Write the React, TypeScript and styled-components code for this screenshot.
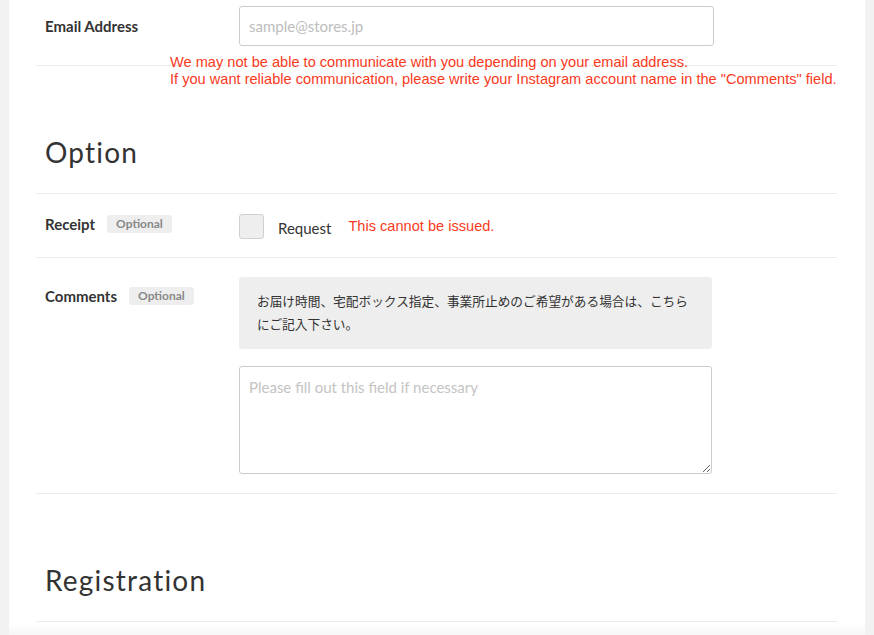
import React from 'react';
import styled, { createGlobalStyle } from 'styled-components';

const GlobalStyle = createGlobalStyle`
  html, body {
    margin: 0;
    padding: 0;
    background: #f2f2f2;
  }
  body {
    font-family: Lato, "Noto Sans CJK JP", sans-serif;
    color: #333;
  }
`;

const Panel = styled.div`
  margin: 0 9px;
  background: #fff;
  padding: 0 28px 0 27px;
`;

const Row = styled.div<{ $top: number; $bottom: number; $align?: string }>`
  position: relative;
  display: flex;
  align-items: ${(p) => p.$align || 'center'};
  padding: ${(p) => `${p.$top}px 0 ${p.$bottom}px 9px`};
  border-bottom: 1px solid #ececec;
`;

const LabelCol = styled.div<{ $height?: number }>`
  width: 194px;
  flex-shrink: 0;
  align-self: ${(p) => (p.$height ? 'flex-start' : 'auto')};
  display: flex;
  align-items: center;
  gap: 12px;
  height: ${(p) => (p.$height ? `${p.$height}px` : 'auto')};
`;

const Label = styled.span`
  font-family: Lato, sans-serif;
  font-weight: 700;
  font-size: 15px;
  color: #333;
`;

const Badge = styled.span`
  display: inline-block;
  background: #eeeeee;
  color: #888;
  font-family: Lato, sans-serif;
  font-weight: 700;
  font-size: 12px;
  line-height: 18px;
  padding: 0 9px;
  border-radius: 3px;
`;

const TextInput = styled.input`
  box-sizing: border-box;
  width: 475px;
  height: 40px;
  border: 1px solid #cccccc;
  border-radius: 3px;
  padding: 0 9px;
  font-family: Lato, sans-serif;
  font-size: 15px;
  color: #333;
  outline: none;

  &::placeholder {
    color: #bdbdbd;
  }
`;

const Warning = styled.p`
  margin: 0;
  font-family: "Liberation Sans", Arial, sans-serif;
  font-size: 14.6px;
  line-height: 17px;
  color: #f93a1c;
  white-space: nowrap;
`;

const EmailNote = styled(Warning)`
  position: absolute;
  left: 134px;
  top: 54px;
`;

const Heading = styled.h2<{ $top: number }>`
  margin: 0;
  padding: ${(p) => `${p.$top}px 0 23px 9px`};
  font-family: Lato, sans-serif;
  font-weight: 400;
  font-size: 28px;
  line-height: 36px;
  letter-spacing: 1.2px;
  color: #333;
  border-bottom: 1px solid #ececec;
`;

const CheckBox = styled.span`
  box-sizing: border-box;
  display: inline-block;
  width: 25px;
  height: 25px;
  background: #eeeeee;
  border: 1px solid #d0d0d0;
  border-radius: 3px;
`;

const CheckLabel = styled.span`
  margin-left: 14px;
  margin-right: 17px;
  font-family: Lato, sans-serif;
  font-size: 15px;
  color: #333;
  position: relative;
  top: 1px;
`;

const FieldCol = styled.div`
  display: flex;
  flex-direction: column;
  gap: 17px;
`;

const InfoBox = styled.div`
  box-sizing: border-box;
  width: 473px;
  background: #eeeeee;
  border-radius: 3px;
  padding: 12px 18px 14px;
  font-family: "Noto Sans CJK JP", sans-serif;
  font-size: 12.7px;
  line-height: 23px;
  color: #333;
`;

const TextArea = styled.textarea`
  box-sizing: border-box;
  width: 473px;
  height: 108px;
  border: 1px solid #cccccc;
  border-radius: 3px;
  padding: 11px 9px;
  font-family: Lato, sans-serif;
  font-size: 15px;
  color: #333;
  outline: none;
  display: block;

  &::placeholder {
    color: #c4c4c4;
  }
`;

const Footer = styled.div`
  height: 13px;
  background: linear-gradient(#ffffff, #f7f7f7);
  margin: 0 -28px 0 -27px;
`;

export default function App() {
  return (
    <>
      <GlobalStyle />
      <Panel>
        <Row $top={6} $bottom={19}>
          <LabelCol>
            <Label>Email Address</Label>
          </LabelCol>
          <TextInput type="email" placeholder="sample@stores.jp" />
          <EmailNote>
            We may not be able to communicate with you depending on your email address.
            <br />
            If you want reliable communication, please write your Instagram account name in the "Comments" field.
          </EmailNote>
        </Row>

        <Heading $top={68}>Option</Heading>

        <Row $top={20} $bottom={18}>
          <LabelCol $height={20}>
            <Label>Receipt</Label>
            <Badge>Optional</Badge>
          </LabelCol>
          <CheckBox />
          <CheckLabel>Request</CheckLabel>
          <Warning>This cannot be issued.</Warning>
        </Row>

        <Row $top={19} $bottom={19} $align="flex-start">
          <LabelCol $height={38}>
            <Label>Comments</Label>
            <Badge>Optional</Badge>
          </LabelCol>
          <FieldCol>
            <InfoBox>
              お届け時間、宅配ボックス指定、事業所止めのご希望がある場合は、こちらにご記入下さい。
            </InfoBox>
            <TextArea placeholder="Please fill out this field if necessary" />
          </FieldCol>
        </Row>

        <Heading $top={68}>Registration</Heading>
        <Footer />
      </Panel>
    </>
  );
}
